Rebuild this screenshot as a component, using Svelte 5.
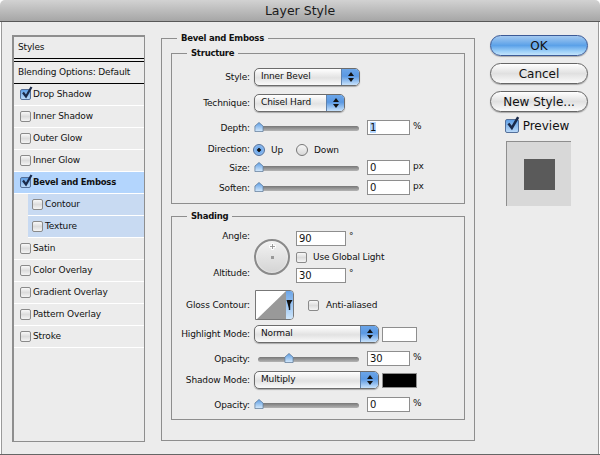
<script>
	const styles = [
		{ name: 'Drop Shadow', on: true },
		{ name: 'Inner Shadow' },
		{ name: 'Outer Glow' },
		{ name: 'Inner Glow' },
		{ name: 'Bevel and Emboss', on: true, active: true },
		{ name: 'Contour', sub: true },
		{ name: 'Texture', sub: true },
		{ name: 'Satin' },
		{ name: 'Color Overlay' },
		{ name: 'Gradient Overlay' },
		{ name: 'Pattern Overlay' },
		{ name: 'Stroke' }
	];
</script>

{#snippet check(on)}
	<span class="check" class:on>
		{#if on}
			<svg viewBox="0 0 14 14" width="14" height="14"><path d="M3 6.5 L6 10.5 L11.5 1" fill="none" stroke="#1a2a4a" stroke-width="2.2"/></svg>
		{/if}
	</span>
{/snippet}

{#snippet select(text, width)}
	<div class="select" style="width:{width}px">
		<span class="select-text">{text}</span>
		<span class="cap">
			<svg viewBox="0 0 8 12" width="8" height="12"><path d="M4 1 L7 5 H1 Z M4 11 L7 7 H1 Z" fill="#111"/></svg>
		</span>
	</div>
{/snippet}

{#snippet slider(pos)}
	<div class="slider">
		<div class="track"></div>
		<svg class="thumb" style="left:{pos}px" viewBox="0 0 10 11" width="10" height="10">
			<defs>
				<linearGradient id="th" x1="0" y1="0" x2="0" y2="1">
					<stop offset="0" stop-color="#5c9ce2"/>
					<stop offset="1" stop-color="#d6eafc"/>
				</linearGradient>
			</defs>
			<path d="M5 .5 L9.5 4.5 V10.5 H.5 V4.5 Z" fill="url(#th)" stroke="#5b7696" stroke-width=".8"/>
		</svg>
	</div>
{/snippet}

{#snippet sliderRow(label, value, unit, pos)}
	<span class="label">{label}</span>
	{@render slider(pos)}
	<span class="field">{value}</span>
	<span class="unit">{unit}</span>
{/snippet}

<div class="window">
	<div class="titlebar">Layer Style</div>
	<div class="content">
		<div class="list">
			<div class="head">Styles</div>
			<div class="head second">Blending Options: Default</div>
			{#each styles as s}
				<div class="item" class:active={s.active} class:sub={s.sub}>
					{@render check(s.on)}
					<span>{s.name}</span>
				</div>
			{/each}
		</div>

		<fieldset class="outer">
			<legend>Bevel and Emboss</legend>
			<fieldset class="structure">
				<legend>Structure</legend>
				<div class="row r-style">
					<span class="label">Style:</span>
					{@render select('Inner Bevel', 106)}
				</div>
				<div class="row r-tech">
					<span class="label">Technique:</span>
					{@render select('Chisel Hard', 91)}
				</div>
				<div class="row r-depth">
					<span class="label">Depth:</span>
					{@render slider(-4)}
					<span class="field"><mark>1</mark></span>
					<span class="unit">%</span>
				</div>
				<div class="row r-dir">
					<span class="label">Direction:</span>
					<span class="radio on"></span><span class="radio-text up">Up</span>
					<span class="radio"></span><span class="radio-text">Down</span>
				</div>
				<div class="row r-size">{@render sliderRow('Size:', '0', 'px', -4)}</div>
				<div class="row r-soften">{@render sliderRow('Soften:', '0', 'px', -4)}</div>
			</fieldset>

			<fieldset class="shading">
				<legend>Shading</legend>
				<div class="angle">
					<div class="angle-labels">
						<span class="label">Angle:</span>
						<span class="label">Altitude:</span>
					</div>
					<div class="dial">
						<svg viewBox="0 0 7 7" width="7" height="7" class="cross"><path d="M3.5 0 V7 M0 3.5 H7" stroke="#fff" stroke-width="2.4"/><path d="M3.5 1 V6 M1 3.5 H6" stroke="#888" stroke-width=".8"/></svg>
						<span class="dot"></span>
					</div>
					<div class="angle-fields">
						<div class="afield"><span class="field">90</span><span class="deg">°</span></div>
						<div class="global">{@render check(false)}<span>Use Global Light</span></div>
						<div class="afield"><span class="field">30</span><span class="deg">°</span></div>
					</div>
				</div>
				<div class="row r-gloss">
					<span class="label">Gloss Contour:</span>
					<div class="contour">
						<svg viewBox="0 0 30 29" width="30" height="29" preserveAspectRatio="none"><path d="M0 29 L30 0 V29 Z" fill="#999"/></svg>
						<span class="contour-cap">
							<svg viewBox="0 0 7 12" width="7" height="12"><path d="M.5 1 H6.5 L3.5 6 V11 Z" fill="#111"/><rect x="2.8" y="4" width="1.4" height="7" fill="#111"/></svg>
						</span>
					</div>
					<div class="anti">{@render check(false)}<span>Anti-aliased</span></div>
				</div>
				<div class="row r-mode">
					<span class="label">Highlight Mode:</span>
					{@render select('Normal', 125)}
					<span class="swatch"></span>
				</div>
				<div class="row r-op1">{@render sliderRow('Opacity:', '30', '%', 26)}</div>
				<div class="row r-mode2">
					<span class="label">Shadow Mode:</span>
					{@render select('Multiply', 125)}
					<span class="swatch black"></span>
				</div>
				<div class="row r-op2">{@render sliderRow('Opacity:', '0', '%', -4)}</div>
			</fieldset>
		</fieldset>

		<div class="side">
			<button class="btn ok">OK</button>
			<button class="btn">Cancel</button>
			<button class="btn">New Style...</button>
			<div class="preview-check">
				<span class="check big on">
					<svg viewBox="0 0 14 14" width="16" height="16"><path d="M3 6.5 L6 10.5 L11.5 1" fill="none" stroke="#1a2a4a" stroke-width="2.2"/></svg>
				</span>
				<span>Preview</span>
			</div>
			<div class="preview"><div class="square"></div></div>
		</div>
	</div>
</div>

<style>
	:global(body) {
		background: #fff;
	}
	.window {
		width: 600px;
		height: 455px;
		box-sizing: border-box;
		display: flex;
		flex-direction: column;
		border-bottom: 1px solid #666;
		font-family: 'DejaVu Sans', sans-serif;
		font-size: 9px;
		letter-spacing: -0.15px;
		color: #111;
		overflow: hidden;
	}
	.titlebar {
		flex: none;
		height: 21px;
		line-height: 22px;
		text-align: center;
		font-size: 12.5px;
		letter-spacing: 0;
		color: #1a1a1a;
		background: linear-gradient(#d2d2d2, #a6a6a6);
		border-bottom: 1px solid #585858;
		border-radius: 5px 5px 0 0;
	}
	.content {
		flex: 1;
		display: flex;
		align-items: flex-start;
		margin: 0 1px;
		padding: 13px 0 0 10px;
		background: #ececec;
		border: 1px solid #9a9a9a;
		border-width: 0 1px;
		box-sizing: border-box;
	}

	/* left list */
	.list {
		flex: none;
		width: 133px;
		height: 407px;
		box-sizing: border-box;
		border: 1px solid #8e8e8e;
		border-width: 2px 1px 1px 2px;
	}
	.head {
		height: 21px;
		line-height: 20px;
		padding-left: 4px;
		border-bottom: 1px solid #000;
	}
	.head.second {
		height: 21px;
		margin-top: 2px;
		line-height: 20px;
		border-top: 1px solid #000;
	}
	.item {
		height: 20px;
		display: flex;
		align-items: center;
		gap: 2px;
		padding: 0 0 1px 6px;
		border-bottom: 1px solid #fff;
	}
	.item.active {
		background: #b3d5fd;
		font-weight: bold;
		font-size: 8.5px;
		letter-spacing: -0.25px;
	}
	.item.sub {
		background: #c8daf2;
		margin-left: 14px;
		padding-left: 4px;
	}
	.check {
		position: relative;
		display: inline-block;
		flex: none;
		box-sizing: border-box;
		width: 11px;
		height: 11px;
		border: 1px solid #8a8a8a;
		border-radius: 2px;
		background: linear-gradient(#f8f8f8, #dcdcdc 50%, #f4f4f4);
	}
	.check.on {
		background: linear-gradient(#5f9fe6, #b9d8f8);
		border-color: #54709a;
	}
	.check svg {
		position: absolute;
		left: -1px;
		top: -4px;
	}
	.check.big {
		width: 14px;
		height: 14px;
	}

	/* middle */
	fieldset {
		margin: 0;
		padding: 0;
		min-width: 0;
		box-sizing: border-box;
		border: 1px solid #8e8e8e;
	}
	legend {
		font-weight: bold;
		font-size: 8.5px;
		letter-spacing: -0.25px;
		padding: 0 4px;
		margin-left: 15px;
		line-height: 12px;
	}
	.outer {
		flex: none;
		margin-left: 16px;
		margin-top: -3px;
		width: 314px;
		height: 409px;
		padding: 3px 9px 0 9px;
	}
	.outer > legend {
		margin-left: 6px;
	}
	.structure {
		height: 157px;
	}
	.shading {
		margin-top: 6px;
		height: 210px;
	}
	.row {
		display: flex;
		align-items: center;
	}
	.label {
		flex: none;
		width: 78px;
		text-align: right;
		margin-right: 4px;
	}
	.select {
		flex: none;
		height: 18px;
		box-sizing: border-box;
		display: flex;
		justify-content: space-between;
		border: 1px solid #6c6c6c;
		border-radius: 5px;
		overflow: hidden;
		background: linear-gradient(#fff, #e2e2e2 55%, #fafafa);
		box-shadow: 0 1px 1px #aaa;
	}
	.select-text {
		padding-left: 6px;
		line-height: 15px;
	}
	.cap {
		width: 17px;
		display: flex;
		align-items: center;
		justify-content: center;
		background: linear-gradient(#6ba5e8, #5a98e2 45%, #c8e2fb);
		border-left: 1px solid #5f82ad;
	}
	.slider {
		flex: none;
		position: relative;
		width: 101px;
		height: 11px;
		margin-left: 4px;
	}
	.track {
		position: absolute;
		left: 0;
		right: 0;
		top: 4px;
		height: 5px;
		border-radius: 3px;
		background: linear-gradient(#777, #b4b4b4);
	}
	.thumb {
		position: absolute;
		top: 0;
	}
	.field {
		flex: none;
		box-sizing: border-box;
		width: 43px;
		height: 15px;
		margin-left: 8px;
		padding-left: 2px;
		line-height: 14px;
		background: #fff;
		border: 1px solid #8e8e8e;
		font-size: 10px;
		letter-spacing: 0;
	}
	mark {
		background: #b3d5fd;
		color: #111;
	}
	.unit {
		margin-left: 3px;
		margin-top: -3px;
	}
	.r-style {
		margin-top: 9px;
	}
	.r-tech,
	.r-depth {
		margin-top: 8px;
	}
	.r-dir {
		margin-top: 6px;
		height: 16px;
	}
	.r-size {
		margin-top: 3px;
	}
	.r-soften {
		margin-top: 5px;
	}
	.radio {
		flex: none;
		box-sizing: border-box;
		width: 12px;
		height: 12px;
		margin-left: -1px;
		border: 1px solid #777;
		border-radius: 50%;
		background: linear-gradient(#f6f6f6, #d8d8d8);
		margin-top: 2px;
	}
	.radio.on {
		background: radial-gradient(circle, #111 0 1.5px, #6ba5e8 2px, #a9cdf5);
		border-color: #54709a;
	}
	.radio-text {
		margin-left: 6px;
		margin-top: 2px;
	}
	.radio-text.up {
		margin-right: 14px;
	}
	.angle {
		display: flex;
		margin-top: 9px;
		height: 53px;
	}
	.angle-labels {
		display: flex;
		flex-direction: column;
		justify-content: space-between;
		height: 47px;
	}
	.dial {
		flex: none;
		position: relative;
		box-sizing: border-box;
		width: 36px;
		height: 36px;
		margin-top: 8px;
		border: 2px solid #8a8a8a;
		border-radius: 50%;
		background: linear-gradient(#f2f2f2, #d4d4d4);
		box-shadow: inset 0 0 2px #fff;
	}
	.cross {
		position: absolute;
		left: 12.5px;
		top: 1.5px;
	}
	.dot {
		position: absolute;
		left: 14.5px;
		top: 14.5px;
		width: 3px;
		height: 3px;
		background: #999;
	}
	.angle-fields {
		display: flex;
		flex-direction: column;
		margin-left: 6px;
	}
	.afield {
		display: flex;
		height: 15px;
	}
	.afield .field {
		width: 50px;
		margin-left: 0;
	}
	.deg {
		margin-left: 3px;
		line-height: 10px;
	}
	.global {
		display: flex;
		align-items: center;
		gap: 6px;
		height: 22px;
	}
	.r-gloss {
		margin-top: 6px;
		height: 30px;
	}
	.contour {
		flex: none;
		display: flex;
		width: 39px;
		height: 30px;
		box-sizing: border-box;
		border: 1px solid #777;
		border-radius: 0 4px 4px 0;
		background: #fff;
		overflow: hidden;
		margin-left: 1px;
	}
	.contour svg {
		flex: none;
	}
	.contour-cap {
		width: 9px;
		display: flex;
		align-items: center;
		justify-content: center;
		background: linear-gradient(#6ba5e8, #cfe6fb);
	}
	.anti {
		display: flex;
		align-items: center;
		gap: 7px;
		margin-left: 14px;
	}
	.r-mode {
		margin-top: 5px;
	}
	.swatch {
		flex: none;
		box-sizing: border-box;
		width: 35px;
		height: 15px;
		margin-left: 3px;
		background: #fff;
		border: 1px solid #8e8e8e;
	}
	.swatch.black {
		background: #000;
	}
	.r-op1 {
		margin-top: 8px;
	}
	.r-mode2 {
		margin-top: 5px;
	}
	.r-op2 {
		margin-top: 8px;
	}

	/* right column */
	.side {
		flex: none;
		width: 98px;
		margin-left: 15px;
		display: flex;
		flex-direction: column;
		align-items: center;
	}
	.btn {
		display: block;
		flex: none;
		width: 98px;
		height: 21px;
		padding: 0;
		margin-bottom: 7px;
		font: inherit;
		font-size: 12px;
		letter-spacing: 0;
		line-height: 18px;
		color: #111;
		border: 1px solid #666;
		border-radius: 11px;
		background: linear-gradient(#fff, #e0e0e0 50%, #fafafa);
		box-shadow: 0 1px 1px #aaa;
	}
	.btn.ok {
		background: linear-gradient(#a4c9f0, #5ba1e8 50%, #9ccff8 80%, #c4e4fb);
		border-color: #3c5a96;
	}
	.preview-check {
		display: flex;
		align-items: center;
		gap: 4px;
		font-size: 12px;
		letter-spacing: 0;
		margin-right: 4px;
	}
	.preview {
		box-sizing: border-box;
		width: 65px;
		height: 65px;
		margin-top: 8px;
		margin-right: 1px;
		padding: 17px 0 0 17px;
		background: #d8d8d8;
		border-top: 1px solid #8e8e8e;
		border-left: 1px solid #8e8e8e;
	}
	.square {
		width: 31px;
		height: 31px;
		background: #5a5a5a;
	}
</style>
